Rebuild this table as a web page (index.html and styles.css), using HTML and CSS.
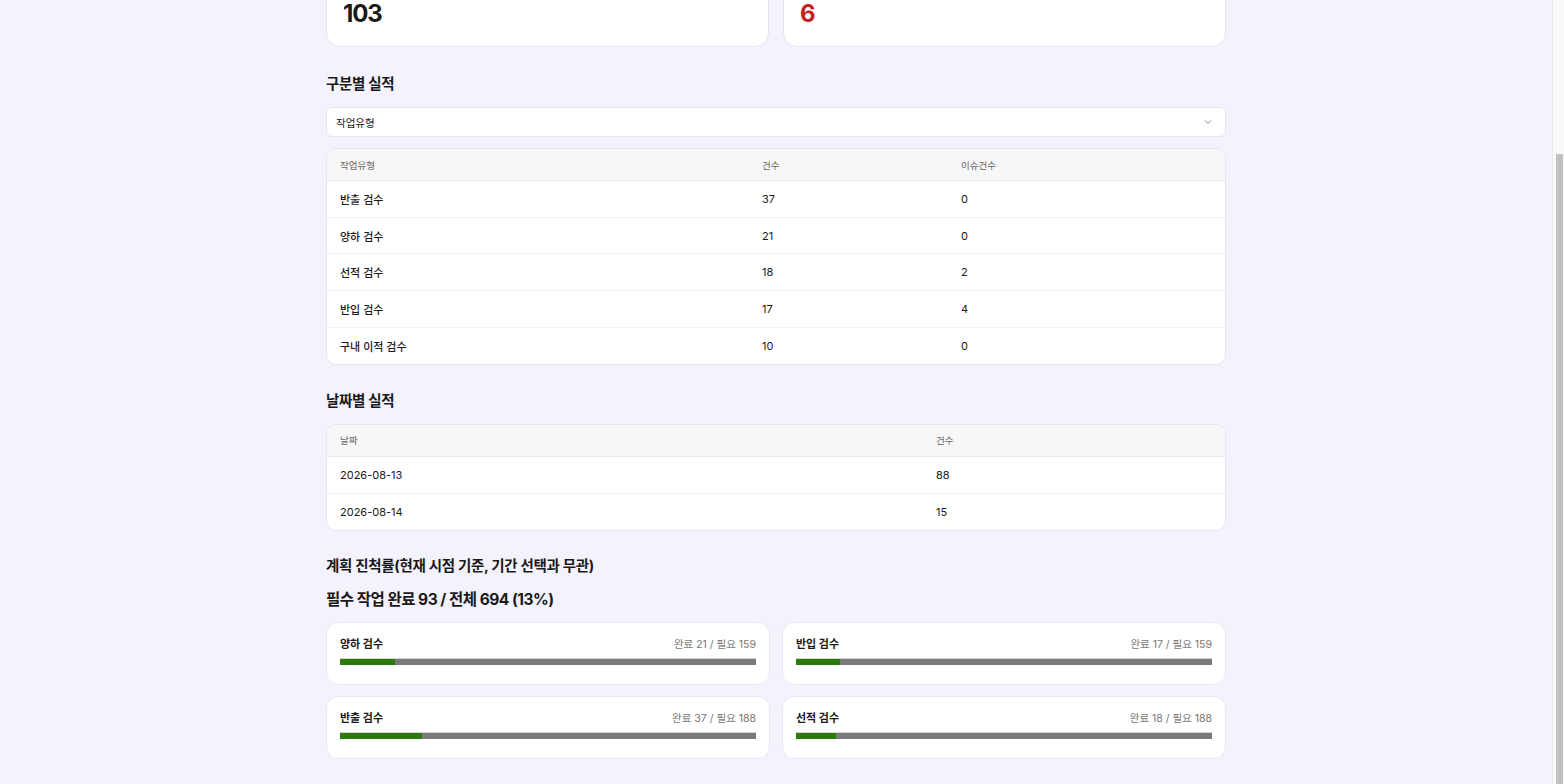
FILE: index.html
```html
<!DOCTYPE html>
<html lang="ko">
<head>
<meta charset="utf-8">
<title>작업 실적</title>
<link rel="stylesheet" href="styles.css">
</head>
<body>
<div class="viewport">
  <main class="page">
    <div class="stats">
      <div class="stat-card">
        <div class="stat-label">전체 작업건수</div>
        <div class="stat-value">103</div>
      </div>
      <div class="stat-card">
        <div class="stat-label">이슈건수</div>
        <div class="stat-value danger">6</div>
      </div>
    </div>

    <section class="section first">
      <h2 class="section-title">구분별 실적</h2>
      <div class="select">
        <span>작업유형</span>
        <svg class="chevron" width="10" height="10" viewBox="0 0 10 10"><path d="M2.2 3.6 L5 6.4 L7.8 3.6" fill="none" stroke="#8a8a8a" stroke-width="1" stroke-linecap="round" stroke-linejoin="round"/></svg>
      </div>
      <div class="table-wrap">
        <table class="data types">
          <colgroup><col class="c-type"><col class="c-count"><col></colgroup>
          <thead><tr><th>작업유형</th><th>건수</th><th>이슈건수</th></tr></thead>
          <tbody>
            <tr><td class="name">반출 검수</td><td>37</td><td>0</td></tr>
            <tr><td class="name">양하 검수</td><td>21</td><td>0</td></tr>
            <tr><td class="name">선적 검수</td><td>18</td><td>2</td></tr>
            <tr><td class="name">반입 검수</td><td>17</td><td>4</td></tr>
            <tr><td class="name">구내 이적 검수</td><td>10</td><td>0</td></tr>
          </tbody>
        </table>
      </div>
    </section>

    <section class="section">
      <h2 class="section-title">날짜별 실적</h2>
      <div class="table-wrap">
        <table class="data">
          <colgroup><col class="c-date"><col></colgroup>
          <thead><tr><th>날짜</th><th>건수</th></tr></thead>
          <tbody>
            <tr><td>2026-08-13</td><td>88</td></tr>
            <tr><td>2026-08-14</td><td>15</td></tr>
          </tbody>
        </table>
      </div>
    </section>

    <section class="section plan">
      <h2 class="section-title plan-title">계획 진척률(현재 시점 기준, 기간 선택과 무관)</h2>
      <div class="summary">필수 작업 완료 93 / 전체 694 (13%)</div>
      <div class="progress-grid">
        <div class="p-card">
          <div class="p-head"><span class="p-name">양하 검수</span><span class="p-meta">완료 21 / 필요 159</span></div>
          <div class="bar"><div class="fill" style="width:13.21%"></div></div>
        </div>
        <div class="p-card">
          <div class="p-head"><span class="p-name">반입 검수</span><span class="p-meta">완료 17 / 필요 159</span></div>
          <div class="bar"><div class="fill" style="width:10.69%"></div></div>
        </div>
        <div class="p-card">
          <div class="p-head"><span class="p-name">반출 검수</span><span class="p-meta">완료 37 / 필요 188</span></div>
          <div class="bar"><div class="fill" style="width:19.68%"></div></div>
        </div>
        <div class="p-card">
          <div class="p-head"><span class="p-name">선적 검수</span><span class="p-meta">완료 18 / 필요 188</span></div>
          <div class="bar"><div class="fill" style="width:9.57%"></div></div>
        </div>
      </div>
    </section>
  </main>
</div>
<div class="scrollbar" aria-hidden="true">
  <div class="scroll-gap"></div>
  <div class="scroll-thumb"></div>
</div>
</body>
</html>
```

FILE: styles.css
```css
html, body {
  height: 100%;
}
body {
  margin: 0;
  display: flex;
  height: 784px;
  overflow: hidden;
  background: #f3f2fd;
  color: #1a1a1a;
  font-family: Inter, "Noto Sans CJK KR", "Noto Sans", sans-serif;
}
.viewport {
  flex: 1;
  height: 784px;
  display: flex;
  flex-direction: column;
  justify-content: flex-end;
  overflow: hidden;
}
.page {
  flex: none;
  width: 900px;
  margin: 0 auto;
  padding: 0 0 25px;
}
.scrollbar {
  flex: none;
  width: 11px;
  height: 784px;
  background: #f9f9f9;
  border-left: 1px solid #ebebeb;
  display: flex;
  flex-direction: column;
  align-items: center;
}
.scroll-gap {
  height: 154px;
  flex: none;
}
.scroll-thumb {
  flex: 1;
  width: 7px;
  margin-left: 1px;
  background: #c1c1c1;
}

.stats {
  display: grid;
  grid-template-columns: 1fr 1fr;
  gap: 14px;
}
.stat-card {
  background: #fff;
  border: 1px solid #e7e6f0;
  border-radius: 14px;
  padding: 15px 16px 16px;
}
.stat-label {
  font-size: 13px;
  line-height: 18px;
  color: #666;
}
.stat-value {
  margin-top: 6px;
  font-size: 24px;
  line-height: 32px;
  font-weight: 700;
  letter-spacing: -1.2px;
}
.stat-value.danger { color: #c81e1e; }

.section { margin-top: 26px; }
.section.first { margin-top: 27px; }
.section.plan { margin-top: 25px; }
.section-title {
  margin: 0 0 13px;
  font-size: 14.5px;
  line-height: 20px;
  font-weight: 700;
  letter-spacing: -0.3px;
}
.section-title.plan-title { margin-bottom: 12px; }
.select {
  display: flex;
  align-items: center;
  justify-content: space-between;
  height: 28px;
  padding: 0 12px 0 9px;
  background: #fff;
  border: 1px solid #e6e5ee;
  border-radius: 6px;
  font-size: 10.5px;
  margin-bottom: 11px;
}
.table-wrap {
  background: #fff;
  border: 1px solid #e7e6ee;
  border-radius: 10px;
  overflow: hidden;
}
.data {
  width: 100%;
  border-collapse: collapse;
  table-layout: fixed;
  font-size: 11px;
}
.c-type { width: 422px; }
.c-count { width: 199px; }
.c-date { width: 596px; }
.data th {
  text-align: left;
  font-weight: 400;
  font-size: 9.5px;
  color: #666;
  background: #f7f7f7;
  height: 31px;
  padding: 0 13px;
  border-bottom: 1px solid #e8e8e8;
}
.data td {
  height: 36px;
  padding: 0 13px;
  border-top: 1px solid #f1f1f1;
  color: #1a1a1a;
}
.data tbody tr:first-child td { border-top: 0; height: 36.5px; }
.data.types td { height: 35.7px; }
.data.types tbody tr:first-child td { height: 35.5px; }
.data td.name { font-weight: 500; }

.summary {
  margin: 0 0 10px;
  font-size: 15.5px;
  line-height: 24px;
  font-weight: 700;
  letter-spacing: -0.5px;
}
.progress-grid {
  display: grid;
  grid-template-columns: 1fr 1fr;
  gap: 11px 12px;
}
.p-card {
  background: #fff;
  border: 1px solid #e9e8f1;
  border-radius: 12px;
  padding: 11px 13px 19px;
}
.p-head {
  display: flex;
  justify-content: space-between;
  align-items: center;
  height: 18px;
}
.p-name {
  font-size: 11px;
  font-weight: 700;
}
.p-meta {
  font-size: 10.5px;
  color: #777;
}
.bar {
  margin-top: 6px;
  height: 7px;
  background: #7b7b7b;
  border-top: 1px solid #d2d2d2;
  box-sizing: border-box;
}
.fill {
  height: 100%;
  background: #2b7a0b;
}
```
